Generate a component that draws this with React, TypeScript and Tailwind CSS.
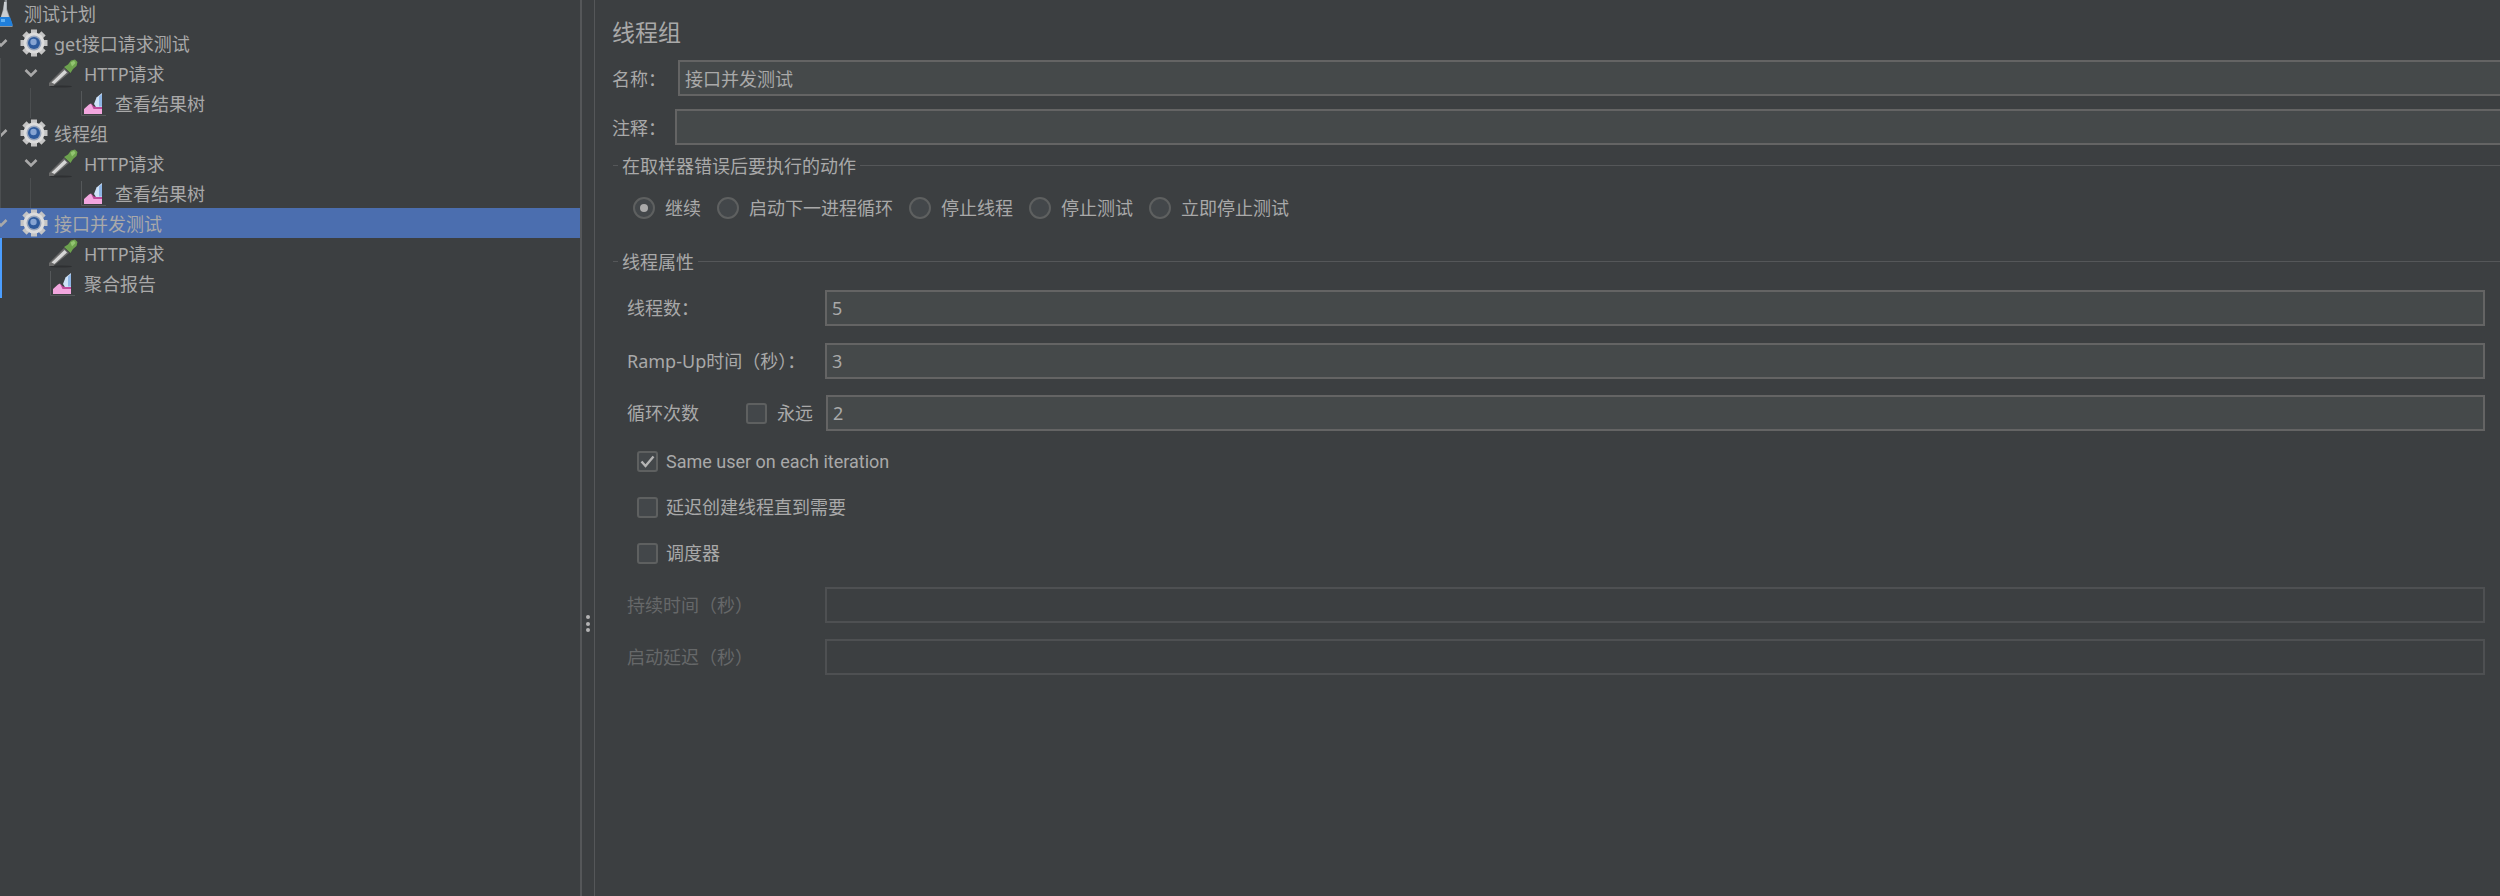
import React from "react";

const font = "font-['Noto_Sans','Noto_Sans_CJK_SC',sans-serif]";

// Tree icons
function Chevron() {
  return (
    <svg width="14" height="10" viewBox="0 0 14 10" className="overflow-visible">
      <path d="M1.5 2 L7 7.5 L12.5 2" fill="none" stroke="#a9a9a9" strokeWidth="2.6" />
    </svg>
  );
}

function Flask() {
  return (
    <svg width="14" height="28" viewBox="0 0 14 28">
      <path d="M5 0 L7 0 L7 10 L12.5 26 L12.5 28 L-2 28 L3 10 Z" fill="#8f9499" />
      <path d="M4 3 L6.5 3 L6.5 11 L9 18 L1 18 L3.5 11 Z" fill="#c9cdd1" />
      <path d="M-1 18 L10 18 L12.5 25 L12.5 27 L-1 27 Z" fill="#1f7fdc" />
      <path d="M1 20 L5 20 L5 23 L1 23 Z" fill="#5fb0f2" />
    </svg>
  );
}

function Gear() {
  const teeth = [0, 45, 90, 135, 180, 225, 270, 315];
  return (
    <svg width="28" height="28" viewBox="0 0 28 28">
      {teeth.map((a) => (
        <rect key={a} x="11" y="0.5" width="6" height="7" fill="#c4c4c4" transform={`rotate(${a} 14 14)`} />
      ))}
      <circle cx="14" cy="14" r="10.5" fill="#dcdcdc" />
      <circle cx="14" cy="14" r="7.5" fill="#9aa7bd" />
      <circle cx="14" cy="14" r="6" fill="#2d5a9c" />
      <circle cx="13.5" cy="13" r="3.2" fill="#86a4d2" />
    </svg>
  );
}

function Dropper() {
  return (
    <svg width="29" height="29" viewBox="0 0 29 29">
      <ellipse cx="12" cy="27.5" rx="11" ry="1" fill="#2e3032" />
      <path d="M0 24 L15 9 L20 14 L4.5 27 L0 27 Z" fill="#6a6a6a" />
      <path d="M2.5 23.5 L15.5 11 L18 13.5 L5.5 25 Z" fill="#d6d6d6" />
      <path d="M15 8 L19 5.5 L22 1.5 L26 0.5 L28.5 3 L27.5 7 L24 10 L21.5 14 Z" fill="#6da24e" />
      <path d="M21.5 3.5 L25 1.8 L26.5 4 L23 7.5 Z" fill="#93c572" />
    </svg>
  );
}

function Report() {
  return (
    <svg width="25" height="25" viewBox="0 0 25 25">
      <path d="M0.5 0 V24.5 H25" fill="none" stroke="#55585a" strokeWidth="1" />
      <path d="M3 23 V18 L8 13.5 L10 12.5 L13 17 H21 V23 Z" fill="#f2a6de" />
      <path d="M10 12.5 L13 15.5 L21 15.5 L21 18 L12.5 18 Z" fill="#c04a9c" />
      <path d="M13 13 L15.5 6.5 L21 2 L21 16 L15 16 Z" fill="#cfe2f8" />
      <path d="M18 5.5 L21 3 L21 15.5 L18 15.5 Z" fill="#8fb6e6" />
    </svg>
  );
}

function TreeRow({
  pad,
  children,
  selected,
}: {
  pad: string;
  children: React.ReactNode;
  selected?: boolean;
}) {
  return (
    <div className={`flex h-[30px] items-center ${pad} ${selected ? "bg-[#4b6eaf]" : ""}`}>{children}</div>
  );
}

function Label({ text }: { text: string }) {
  return <span className="-ml-[1px] pt-[2px] text-[18px] leading-[28px] whitespace-nowrap text-[#a9a9a9]">{text}</span>;
}

function GearRow({ text, selected }: { text: string; selected?: boolean }) {
  return (
    <TreeRow pad="pl-0" selected={selected}>
      <div className="-ml-[6px] w-[26px]">
        <Chevron />
      </div>
      <div className="mr-[7px] w-[28px]">
        <Gear />
      </div>
      <Label text={text} />
    </TreeRow>
  );
}

function HttpRow({ open }: { open?: boolean }) {
  return (
    <TreeRow pad={open ? "pl-[24px]" : "pl-[49px]"}>
      {open && (
        <div className="w-[25px]">
          <Chevron />
        </div>
      )}
      <div className="mr-[7px] w-[29px]">
        <Dropper />
      </div>
      <Label text="HTTP请求" />
    </TreeRow>
  );
}

function ReportRow({ text, pad }: { text: string; pad: string }) {
  return (
    <TreeRow pad={pad}>
      <div className="mr-[10px] w-[25px]">
        <Report />
      </div>
      <Label text={text} />
    </TreeRow>
  );
}

function TreePanel() {
  return (
    <div className="relative w-[580px] shrink-0">
      <div className="-mt-[2px]">
        <TreeRow pad="pl-0">
          <div className="w-[25px]">
            <Flask />
          </div>
          <Label text="测试计划" />
        </TreeRow>
        <GearRow text="get接口请求测试" />
        <HttpRow open />
        <ReportRow text="查看结果树" pad="pl-[81px]" />
        <GearRow text="线程组" />
        <HttpRow open />
        <ReportRow text="查看结果树" pad="pl-[81px]" />
        <GearRow text="接口并发测试" selected />
        <HttpRow />
        <ReportRow text="聚合报告" pad="pl-[50px]" />
      </div>
      {/* tree guide lines */}
      <div className="absolute left-0 top-[58px] h-[150px] w-px bg-[#4c4f51]" />
      <div className="absolute left-[30px] top-[88px] h-[30px] w-px bg-[#4c4f51]" />
      <div className="absolute left-[30px] top-[178px] h-[30px] w-px bg-[#4c4f51]" />
      <div className="absolute left-0 top-[238px] h-[60px] w-[2px] bg-[#4b9eff]" />
    </div>
  );
}

function Divider() {
  return (
    <div className="flex h-full w-[15px] shrink-0 flex-col items-center border-r border-l-2 border-r-[#555759] border-l-[#555759]">
      <div className="mt-[615px] flex flex-col gap-[2.5px] pr-[1px]">
        <div className="size-[4px] rounded-full bg-[#b4b4b4]" />
        <div className="size-[4px] rounded-full bg-[#b4b4b4]" />
        <div className="size-[4px] rounded-full bg-[#b4b4b4]" />
      </div>
    </div>
  );
}

function Legend({ text, className }: { text: string; className: string }) {
  return (
    <div className={`flex h-[24px] items-center ${className}`}>
      <div className="ml-[1px] h-px w-[5px] bg-[#555759]" />
      <span className="mx-[4px] pt-[2px] text-[18px] whitespace-nowrap text-[#a9a9a9]">{text}</span>
      <div className="h-px flex-1 bg-[#555759]" />
    </div>
  );
}

function Radio({ text, checked }: { text: string; checked?: boolean }) {
  return (
    <div className="flex items-center">
      <div className="flex size-[22px] items-center justify-center rounded-full border-2 border-[#5e6060] bg-[#43474a]">
        {checked && <div className="size-[8px] rounded-full bg-[#a9a9a9]" />}
      </div>
      <span className="ml-[10px] mr-[1px] text-[18px] whitespace-nowrap text-[#a9a9a9]">{text}</span>
    </div>
  );
}

function Box({ checked }: { checked?: boolean }) {
  return (
    <div className="flex size-[21px] shrink-0 items-center justify-center rounded-[3px] border-2 border-[#5e6060] bg-[#43474a]">
      {checked && (
        <svg width="15" height="13" viewBox="0 0 15 13">
          <path d="M1.5 6.5 L5.5 11 L13.5 1.5" fill="none" stroke="#b4b4b4" strokeWidth="2.4" />
        </svg>
      )}
    </div>
  );
}

function Field({ value, className, disabled }: { value?: string; className?: string; disabled?: boolean }) {
  return (
    <div
      className={`flex h-[36px] items-center border-2 px-[5px] text-[18px] text-[#a9a9a9] ${
        disabled ? "border-[#4e5052]" : "border-[#646464] bg-[#45494a]"
      } ${className ?? ""}`}
    >
      {value}
    </div>
  );
}

function PropRow({ label, value, className, disabled }: { label: string; value?: string; className: string; disabled?: boolean }) {
  return (
    <div className={`flex items-center pl-[15px] pr-[15px] ${className}`}>
      <span className={`w-[198px] shrink-0 text-[18px] whitespace-nowrap ${disabled ? "text-[#666869]" : "text-[#a9a9a9]"}`}>
        {label}
      </span>
      <Field value={value} disabled={disabled} className="flex-1" />
    </div>
  );
}

function CheckRow({ text, checked, className, latin }: { text: string; checked?: boolean; className: string; latin?: boolean }) {
  return (
    <div className={`flex h-[30px] items-center pl-[25px] ${className}`}>
      <Box checked={checked} />
      <span className={`ml-[8px] text-[18px] whitespace-nowrap text-[#a9a9a9] ${latin ? "font-['Roboto',sans-serif]" : ""}`}>{text}</span>
    </div>
  );
}

function ThreadGroupPanel() {
  return (
    <div className="min-w-0 flex-1 overflow-hidden pl-[17px]">
      <div className="h-[60px] pt-[13px] text-[23px] leading-[38px] text-[#a9a9a9]">线程组</div>
      <div className="flex items-center">
        <span className="w-[66px] shrink-0 pt-[3px] text-[18px] text-[#a9a9a9]">名称：</span>
        <Field value="接口并发测试" className="-mr-[10px] flex-1 pt-[3px]" />
      </div>
      <div className="mt-[13px] flex items-center">
        <span className="w-[63px] shrink-0 pt-[2px] text-[18px] text-[#a9a9a9]">注释：</span>
        <Field className="-mr-[10px] flex-1" />
      </div>

      <Legend text="在取样器错误后要执行的动作" className="mt-[8px]" />
      <div className="mt-[16px] flex h-[30px] items-center gap-[15px] pl-[21px]">
        <Radio text="继续" checked />
        <Radio text="启动下一进程循环" />
        <Radio text="停止线程" />
        <Radio text="停止测试" />
        <Radio text="立即停止测试" />
      </div>

      <Legend text="线程属性" className="mt-[26px]" />
      <PropRow label="线程数：" value="5" className="mt-[17px]" />
      <PropRow label="Ramp-Up时间（秒）：" value="3" className="mt-[17px]" />
      <div className="mt-[16px] flex items-center pl-[15px] pr-[15px]">
        <span className="w-[119px] shrink-0 text-[18px] text-[#a9a9a9]">循环次数</span>
        <Box />
        <span className="ml-[10px] w-[49px] shrink-0 text-[18px] text-[#a9a9a9]">永远</span>
        <Field value="2" className="flex-1" />
      </div>
      <CheckRow text="Same user on each iteration" checked latin className="mt-[15px]" />
      <CheckRow text="延迟创建线程直到需要" className="mt-[16px]" />
      <CheckRow text="调度器" className="mt-[16px]" />
      <PropRow label="持续时间（秒）" className="mt-[19px]" disabled />
      <PropRow label="启动延迟（秒）" className="mt-[16px]" disabled />
    </div>
  );
}

export default function App() {
  return (
    <div className={`flex h-[896px] w-[2500px] overflow-hidden bg-[#3c3f41] ${font}`}>
      <TreePanel />
      <Divider />
      <ThreadGroupPanel />
    </div>
  );
}
